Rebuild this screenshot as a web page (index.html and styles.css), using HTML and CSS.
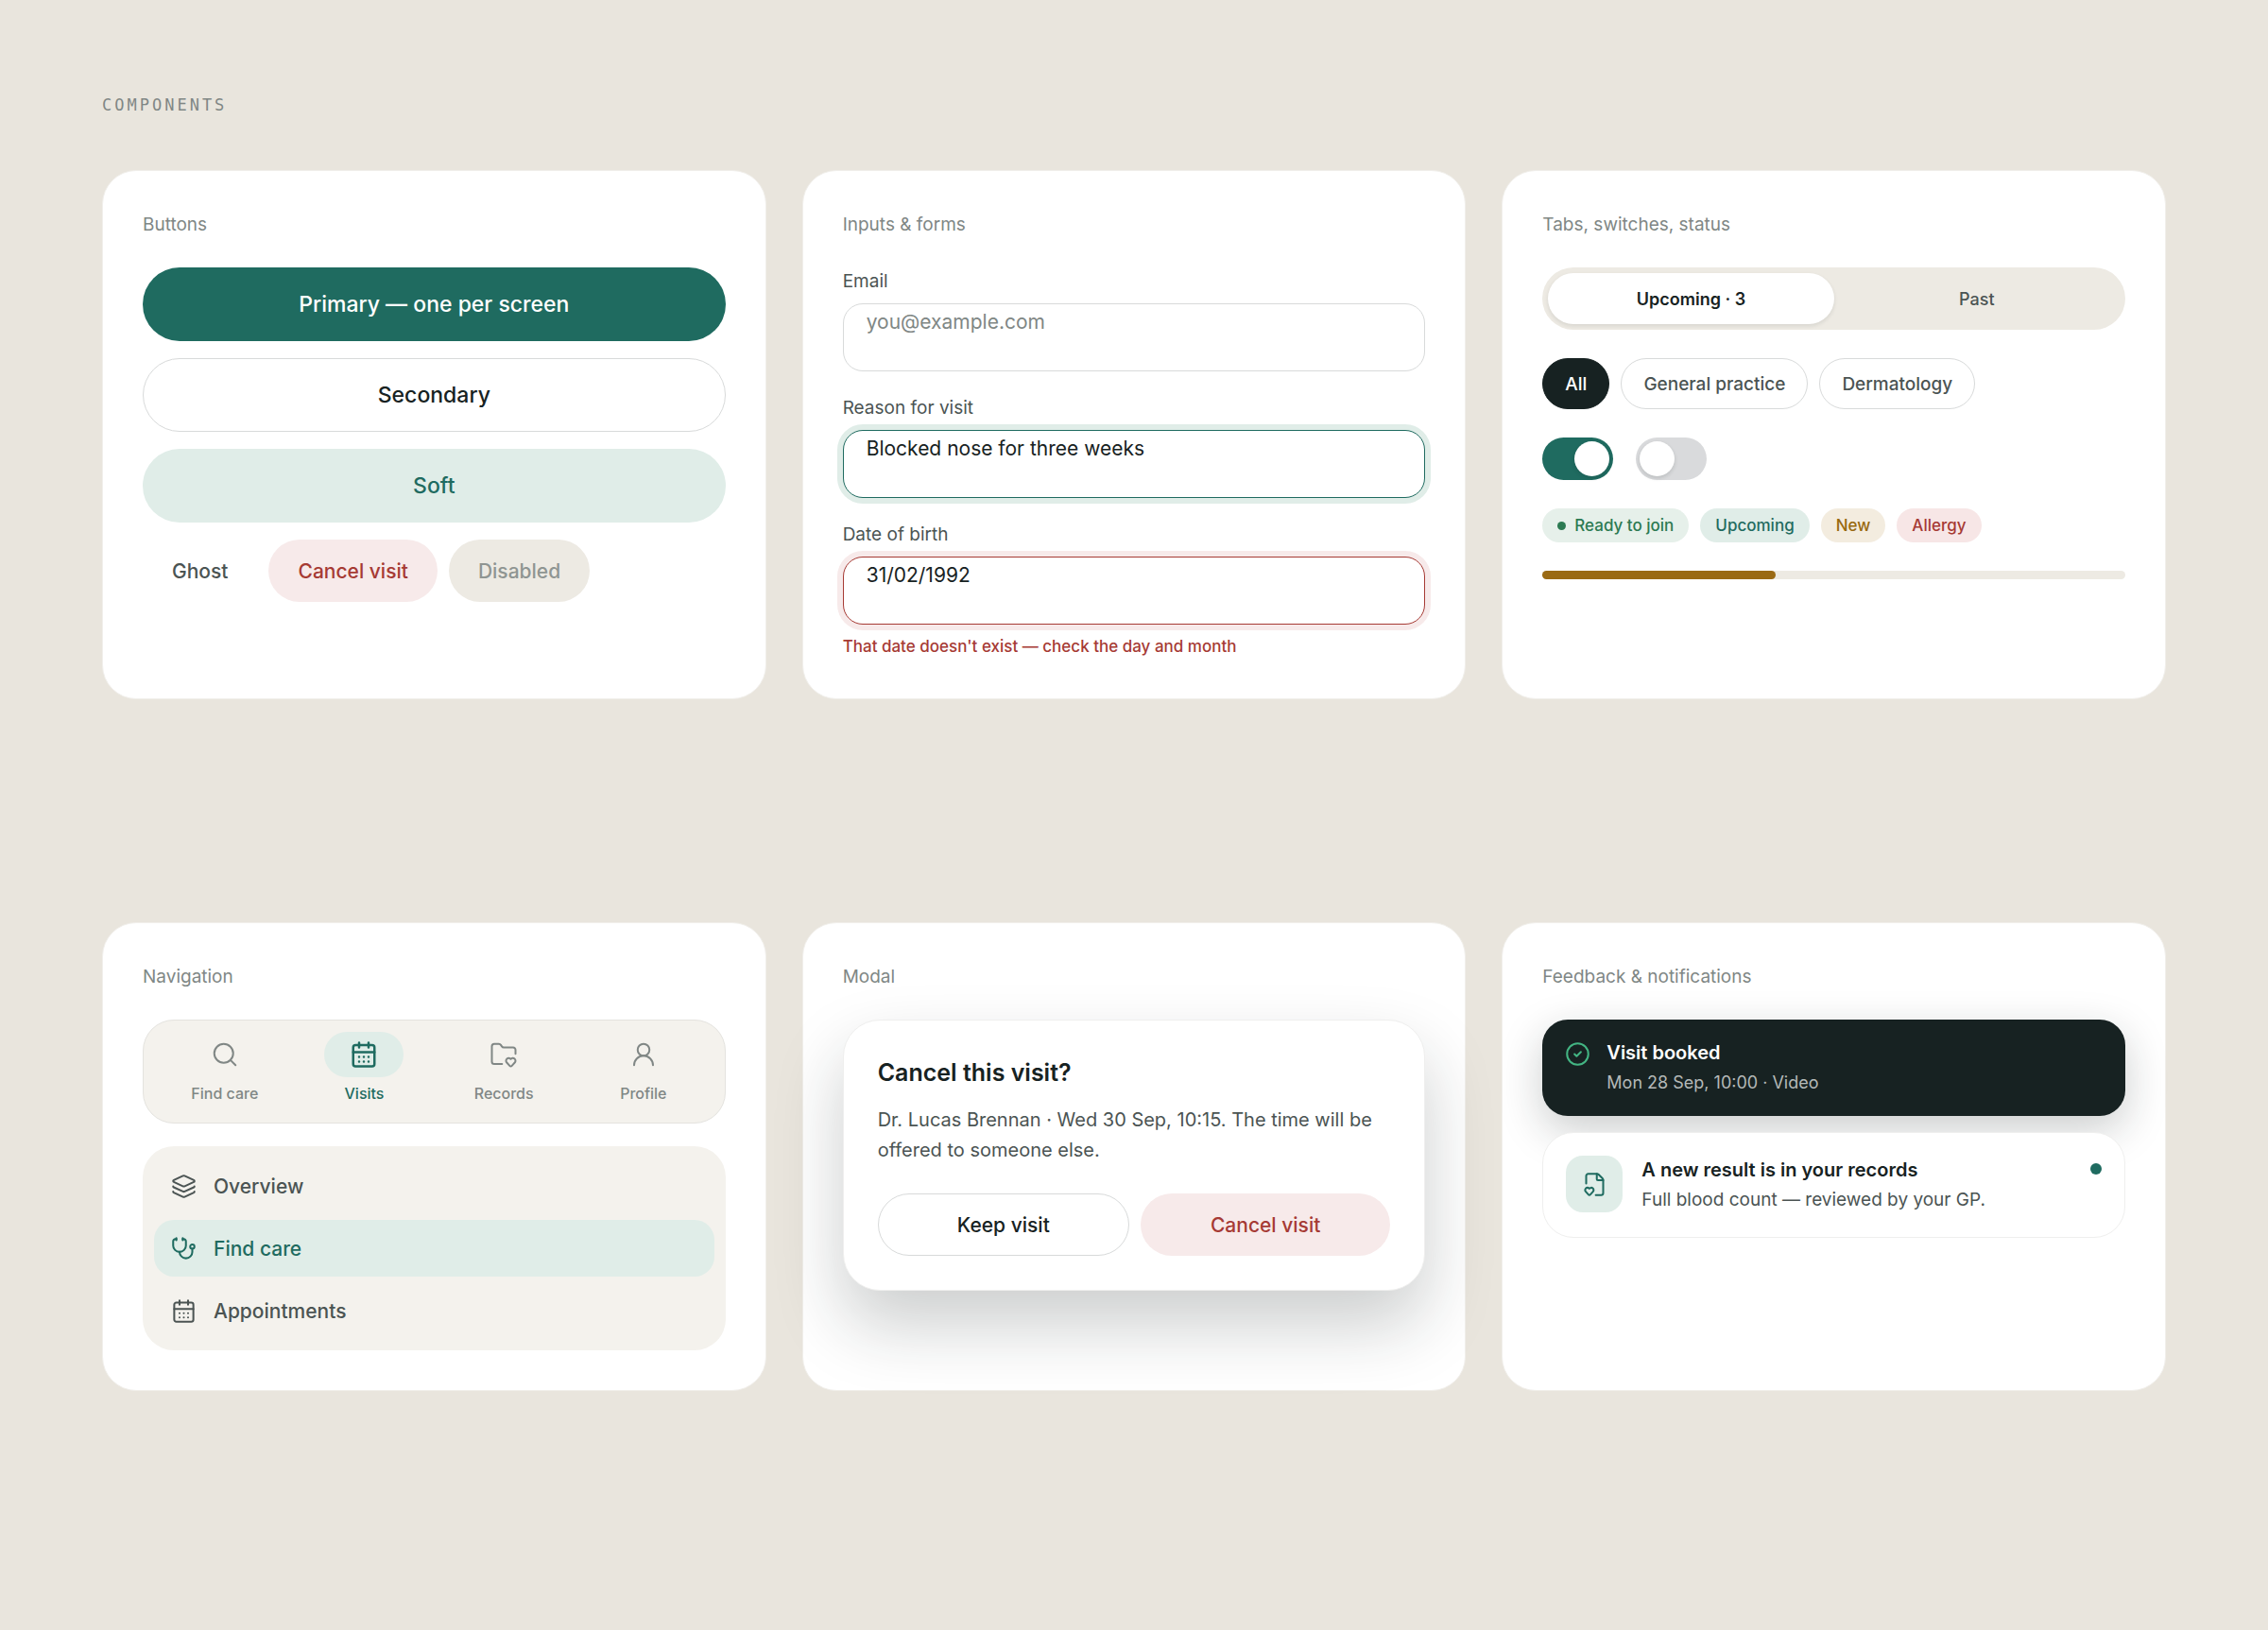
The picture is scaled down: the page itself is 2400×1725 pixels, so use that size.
FILE: index.html
```html
<!DOCTYPE html>
<html lang="en">
<head>
    <meta charset="UTF-8">
    <meta name="viewport" content="width=device-width, initial-scale=1">
    <title>Components</title>
    <link rel="stylesheet" href="styles.css">
</head>
<body>
    <!-- icon sprite -->
    <svg class="sprite" aria-hidden="true">
        <symbol id="i-search" viewBox="0 0 24 24"><circle cx="11" cy="11" r="8"/><path d="m21 21-4.3-4.3"/></symbol>
        <symbol id="i-calendar" viewBox="0 0 24 24"><path d="M8 2v4M16 2v4"/><rect x="3" y="4" width="18" height="18" rx="2"/><path d="M3 10h18M8 14h.01M12 14h.01M16 14h.01M8 18h.01M12 18h.01M16 18h.01"/></symbol>
        <symbol id="i-folder" viewBox="0 0 24 24"><path d="M10.638 20H4a2 2 0 0 1-2-2V5a2 2 0 0 1 2-2h3.9a2 2 0 0 1 1.69.9l.81 1.2a2 2 0 0 0 1.67.9H20a2 2 0 0 1 2 2v3.417"/><path d="M14.62 18.8A2.25 2.25 0 1 1 18 15.836a2.25 2.25 0 1 1 3.38 2.966l-2.626 2.856a1 1 0 0 1-1.507 0z"/></symbol>
        <symbol id="i-user" viewBox="0 0 24 24"><circle cx="12" cy="8" r="5"/><path d="M20 21a8 8 0 0 0-16 0"/></symbol>
        <symbol id="i-layers" viewBox="0 0 24 24"><path d="M12.83 2.18a2 2 0 0 0-1.66 0L2.6 6.08a1 1 0 0 0 0 1.83l8.58 3.91a2 2 0 0 0 1.66 0l8.58-3.9a1 1 0 0 0 0-1.83z"/><path d="M2 12a1 1 0 0 0 .58.91l8.6 3.91a2 2 0 0 0 1.65 0l8.58-3.9A1 1 0 0 0 22 12"/><path d="M2 17a1 1 0 0 0 .58.91l8.6 3.91a2 2 0 0 0 1.65 0l8.58-3.9A1 1 0 0 0 22 17"/></symbol>
        <symbol id="i-stethoscope" viewBox="0 0 24 24"><path d="M11 2v2M5 2v2"/><path d="M5 3H4a2 2 0 0 0-2 2v4a6 6 0 0 0 12 0V5a2 2 0 0 0-2-2h-1"/><path d="M8 15a6 6 0 0 0 12 0v-3"/><circle cx="20" cy="10" r="2"/></symbol>
        <symbol id="i-check" viewBox="0 0 24 24"><circle cx="12" cy="12" r="10"/><path d="m9 12 2 2 4-4"/></symbol>
        <symbol id="i-file" viewBox="0 0 24 24"><path d="M13 22h5a2 2 0 0 0 2-2V8a2.4 2.4 0 0 0-.706-1.706l-3.588-3.588A2.4 2.4 0 0 0 14 2H6a2 2 0 0 0-2 2v7"/><path d="M14 2v5a1 1 0 0 0 1 1h5"/><path d="M3.62 18.8A2.25 2.25 0 1 1 7 15.836a2.25 2.25 0 1 1 3.38 2.966l-2.626 2.855a1 1 0 0 1-1.507 0z"/></symbol>
    </svg>

    <main class="page">
        <h1 class="eyebrow">Components</h1>

        <div class="grid">
            <section class="card">
                <h2 class="card-title">Buttons</h2>
                <div class="buttons">
                    <button class="btn btn-primary">Primary — one per screen</button>
                    <button class="btn btn-secondary">Secondary</button>
                    <button class="btn btn-soft">Soft</button>
                    <div class="btn-row">
                        <button class="btn btn-sm btn-ghost">Ghost</button>
                        <button class="btn btn-sm btn-danger">Cancel visit</button>
                        <button class="btn btn-sm" disabled>Disabled</button>
                    </div>
                </div>
            </section>

            <section class="card">
                <h2 class="card-title">Inputs &amp; forms</h2>
                <form class="form">
                    <div class="field">
                        <label for="email">Email</label>
                        <input id="email" type="email" placeholder="you@example.com">
                    </div>
                    <div class="field">
                        <label for="reason">Reason for visit</label>
                        <input id="reason" class="is-focus" type="text" value="Blocked nose for three weeks">
                    </div>
                    <div class="field">
                        <label for="dob">Date of birth</label>
                        <input id="dob" class="is-error" type="text" value="31/02/1992" aria-describedby="dob-error">
                        <p class="error" id="dob-error">That date doesn't exist — check the day and month</p>
                    </div>
                </form>
            </section>

            <section class="card">
                <h2 class="card-title">Tabs, switches, status</h2>
                <div class="controls">
                    <div class="tabs" role="tablist">
                        <button class="tab active" role="tab" aria-selected="true">Upcoming · 3</button>
                        <button class="tab" role="tab" aria-selected="false">Past</button>
                    </div>
                    <div class="chips">
                        <button class="chip active">All</button>
                        <button class="chip">General practice</button>
                        <button class="chip">Dermatology</button>
                    </div>
                    <div class="switches">
                        <input class="switch" type="checkbox" role="switch" aria-label="Switch on" checked>
                        <input class="switch" type="checkbox" role="switch" aria-label="Switch off">
                    </div>
                    <div class="badges">
                        <span class="badge badge-ready">Ready to join</span>
                        <span class="badge badge-upcoming">Upcoming</span>
                        <span class="badge badge-new">New</span>
                        <span class="badge badge-allergy">Allergy</span>
                    </div>
                    <progress class="progress" value="40" max="100" aria-label="Progress"></progress>
                </div>
            </section>
        </div>

        <div class="grid">
            <section class="card">
                <h2 class="card-title">Navigation</h2>
                <nav class="tabbar">
                    <a href="#"><span class="pill"><svg class="icon"><use href="#i-search"/></svg></span>Find care</a>
                    <a href="#" class="active"><span class="pill"><svg class="icon"><use href="#i-calendar"/></svg></span>Visits</a>
                    <a href="#"><span class="pill"><svg class="icon"><use href="#i-folder"/></svg></span>Records</a>
                    <a href="#"><span class="pill"><svg class="icon"><use href="#i-user"/></svg></span>Profile</a>
                </nav>
                <nav class="sidebar">
                    <a href="#"><svg class="icon icon-sm"><use href="#i-layers"/></svg>Overview</a>
                    <a href="#" class="active"><svg class="icon icon-sm"><use href="#i-stethoscope"/></svg>Find care</a>
                    <a href="#"><svg class="icon icon-sm"><use href="#i-calendar"/></svg>Appointments</a>
                </nav>
            </section>

            <section class="card">
                <h2 class="card-title">Modal</h2>
                <div class="modal" role="dialog" aria-labelledby="modal-title">
                    <h3 id="modal-title">Cancel this visit?</h3>
                    <p>Dr. Lucas Brennan · Wed 30 Sep, 10:15. The time will be offered to someone else.</p>
                    <div class="modal-actions">
                        <button class="btn btn-sm btn-secondary">Keep visit</button>
                        <button class="btn btn-sm btn-danger">Cancel visit</button>
                    </div>
                </div>
            </section>

            <section class="card">
                <h2 class="card-title">Feedback &amp; notifications</h2>
                <div class="feedback">
                    <div class="toast" role="status">
                        <svg class="icon icon-sm"><use href="#i-check"/></svg>
                        <div>
                            <h3>Visit booked</h3>
                            <p>Mon 28 Sep, 10:00 · Video</p>
                        </div>
                    </div>
                    <article class="notice">
                        <span class="tile"><svg class="icon icon-sm"><use href="#i-file"/></svg></span>
                        <div class="notice-text">
                            <h3>A new result is in your records</h3>
                            <p>Full blood count — reviewed by your GP.</p>
                        </div>
                        <span class="unread"></span>
                    </article>
                </div>
            </section>
        </div>
    </main>
</body>
</html>
```
FILE: styles.css
```css
:root {
    --bg: #e9e5dd;
    --surface: #f4f2ed;
    --sunken: #edeae3;
    --line: #d8dada;
    --ink: #172222;
    --text: #4b5453;
    --muted: #808785;
    --green: #1f6b60;
    --green-soft: #e0ede8;
    --red: #a63a34;
    --red-soft: #f7eaea;
}

* {
    box-sizing: border-box;
}

body {
    margin: 0;
    background: var(--bg);
    color: var(--ink);
    font-family: Inter, "Open Sans", sans-serif;
}

h1, h2, h3, p {
    margin: 0;
}

button, input {
    font-family: inherit;
}

a {
    text-decoration: none;
}

.sprite {
    position: absolute;
    width: 0;
    height: 0;
}

.icon {
    width: 30px;
    height: 30px;
    flex: none;
    fill: none;
    stroke: currentColor;
    stroke-width: 1.6;
    stroke-linecap: round;
    stroke-linejoin: round;
}

.icon-sm {
    width: 27px;
    height: 27px;
    stroke-width: 1.8;
}

/* page */
.page {
    padding: 98px 108px;
}

.eyebrow {
    margin-bottom: 56px;
    color: var(--muted);
    font: 400 17px/26px "DejaVu Sans Mono", monospace;
    letter-spacing: 3px;
    text-transform: uppercase;
}

.grid {
    display: grid;
    grid-template-columns: repeat(3, 1fr);
    gap: 38px;
}

.grid + .grid {
    margin-top: 236px;
}

.card {
    padding: 42px;
    background: #fff;
    border: 1px solid #f1efeb;
    border-radius: 36px;
}

.card-title {
    margin-bottom: 30px;
    color: var(--muted);
    font-size: 19px;
    font-weight: 400;
    line-height: 30px;
}

/* buttons */
.buttons {
    display: flex;
    flex-direction: column;
    gap: 18px;
}

.btn {
    height: 78px;
    padding: 0 31px;
    border: 0;
    border-radius: 39px;
    font-size: 23px;
    font-weight: 500;
}

.btn-sm {
    height: 66px;
    font-size: 21px;
}

.btn-primary {
    background: var(--green);
    color: #fff;
}

.btn-secondary {
    background: #fff;
    border: 1px solid var(--line);
    color: var(--ink);
}

.btn-soft {
    background: var(--green-soft);
    color: var(--green);
}

.btn-ghost {
    background: none;
    color: var(--text);
}

.btn-danger {
    background: var(--red-soft);
    color: var(--red);
}

.btn:disabled {
    background: var(--sunken);
    color: #8f9592;
}

.btn-row {
    display: flex;
    gap: 12px;
}

/* form */
.form {
    display: flex;
    flex-direction: column;
    gap: 24px;
}

.field label {
    display: block;
    margin-bottom: 8px;
    color: var(--text);
    font-size: 19px;
    font-weight: 400;
    line-height: 30px;
}

.field input {
    display: block;
    width: 100%;
    height: 72px;
    padding: 0 24px 34px;
    background: #fff;
    border: 1px solid var(--line);
    border-radius: 21px;
    color: var(--ink);
    font-size: 21px;
}

.field input::placeholder {
    color: var(--muted);
}

.field .is-focus {
    border-color: var(--green);
    box-shadow: 0 0 0 6px var(--green-soft);
}

.field .is-error {
    border-color: var(--red);
    box-shadow: 0 0 0 6px var(--red-soft);
}

.error {
    margin-top: 10px;
    color: var(--red);
    font-size: 17px;
    font-weight: 500;
    line-height: 26px;
}

/* tabs, chips, switches */
.controls {
    display: flex;
    flex-direction: column;
    gap: 30px;
}

.tabs {
    display: flex;
    padding: 6px;
    background: var(--sunken);
    border-radius: 33px;
}

.tab {
    flex: 1;
    height: 54px;
    background: none;
    border: 0;
    border-radius: 27px;
    color: var(--text);
    font-size: 18px;
    font-weight: 500;
}

.tab.active {
    background: #fff;
    box-shadow: 0 2px 4px rgba(23, 34, 34, .1);
    color: var(--ink);
    font-weight: 600;
}

.chips, .badges {
    display: flex;
    flex-wrap: wrap;
    gap: 12px;
}

.chip {
    height: 54px;
    padding: 0 23px;
    background: #fff;
    border: 1px solid var(--line);
    border-radius: 27px;
    color: var(--text);
    font-size: 19px;
    font-weight: 500;
}

.chip.active {
    background: var(--ink);
    border-color: var(--ink);
    color: #fff;
}

.switches {
    display: flex;
    gap: 24px;
}

.switch {
    appearance: none;
    display: flex;
    width: 75px;
    height: 45px;
    margin: 0;
    padding: 4px;
    background: #d9dadc;
    border-radius: 23px;
}

.switch::before {
    content: "";
    width: 37px;
    height: 37px;
    background: #fff;
    border-radius: 50%;
    box-shadow: 0 2px 4px rgba(23, 34, 34, .15);
}

.switch:checked {
    justify-content: flex-end;
    background: var(--green);
}

.badge {
    display: flex;
    align-items: center;
    gap: 9px;
    height: 36px;
    padding: 0 16px;
    border-radius: 18px;
    font-size: 17px;
    font-weight: 500;
}

.badge-ready {
    background: #e6f0ea;
    color: #2c7a52;
}

.badge-ready::before {
    content: "";
    width: 9px;
    height: 9px;
    background: currentColor;
    border-radius: 50%;
}

.badge-upcoming {
    background: var(--green-soft);
    color: var(--green);
}

.badge-new {
    background: #f3ecdf;
    color: #98690f;
}

.badge-allergy {
    background: #f7e6e6;
    color: var(--red);
}

.progress {
    appearance: none;
    display: block;
    width: 100%;
    height: 9px;
    border: 0;
}

.progress::-webkit-progress-bar {
    background: var(--sunken);
    border-radius: 5px;
}

.progress::-webkit-progress-value {
    background: #9a6a14;
    border-radius: 5px;
}

/* navigation */
.tabbar {
    display: grid;
    grid-template-columns: repeat(4, 1fr);
    margin-bottom: 24px;
    padding: 12px 12px 20px;
    background: var(--surface);
    border: 1px solid #e4e3df;
    border-radius: 33px;
}

.tabbar a {
    display: flex;
    flex-direction: column;
    align-items: center;
    gap: 6px;
    color: var(--muted);
    font-size: 16px;
    font-weight: 500;
    line-height: 22px;
}

.pill {
    display: flex;
    align-items: center;
    justify-content: center;
    width: 84px;
    height: 48px;
    border-radius: 24px;
}

.tabbar .active {
    color: var(--green);
}

.active .pill {
    background: var(--green-soft);
}

.active .pill .icon {
    stroke-width: 2;
}

.sidebar {
    display: flex;
    flex-direction: column;
    gap: 6px;
    padding: 12px;
    background: var(--surface);
    border-radius: 33px;
}

.sidebar a {
    display: flex;
    align-items: center;
    gap: 18px;
    height: 60px;
    padding: 0 18px;
    border-radius: 21px;
    color: var(--text);
    font-size: 21px;
    font-weight: 500;
}

.sidebar .active {
    background: var(--green-soft);
    color: var(--green);
}

/* modal */
.modal {
    padding: 36px;
    background: #fff;
    border: 1px solid #efefee;
    border-radius: 39px;
    box-shadow: 0 36px 72px rgba(23, 34, 34, .22);
}

.modal h3 {
    margin-bottom: 15px;
    font-size: 25px;
    font-weight: 600;
    line-height: 38px;
}

.modal p {
    margin-bottom: 30px;
    color: var(--text);
    font-size: 20px;
    line-height: 32px;
}

.modal-actions {
    display: flex;
    gap: 12px;
}

.modal-actions .btn {
    flex: 1;
}

/* feedback */
.feedback {
    display: flex;
    flex-direction: column;
    gap: 17px;
}

.feedback h3 {
    font-size: 20px;
    font-weight: 600;
    line-height: 31px;
}

.feedback p {
    font-size: 18px;
    line-height: 31px;
}

.toast {
    display: flex;
    gap: 17px;
    padding: 20px 24px;
    background: var(--ink);
    border-radius: 27px;
    box-shadow: 0 15px 45px rgba(23, 34, 34, .22);
    color: #fff;
}

.toast .icon {
    margin-top: 3px;
    color: #43b583;
}

.toast p {
    color: #b4b9b8;
}

.notice {
    display: flex;
    gap: 20px;
    padding: 24px;
    background: #fff;
    border: 1px solid #efefee;
    border-radius: 33px;
}

.notice p {
    color: var(--text);
    font-size: 19px;
}

.notice-text {
    flex: 1;
}

.tile {
    display: flex;
    align-items: center;
    justify-content: center;
    width: 60px;
    height: 60px;
    background: var(--green-soft);
    border-radius: 18px;
    color: var(--green);
}

.unread {
    width: 12px;
    height: 12px;
    margin-top: 8px;
    background: var(--green);
    border-radius: 50%;
}
```
